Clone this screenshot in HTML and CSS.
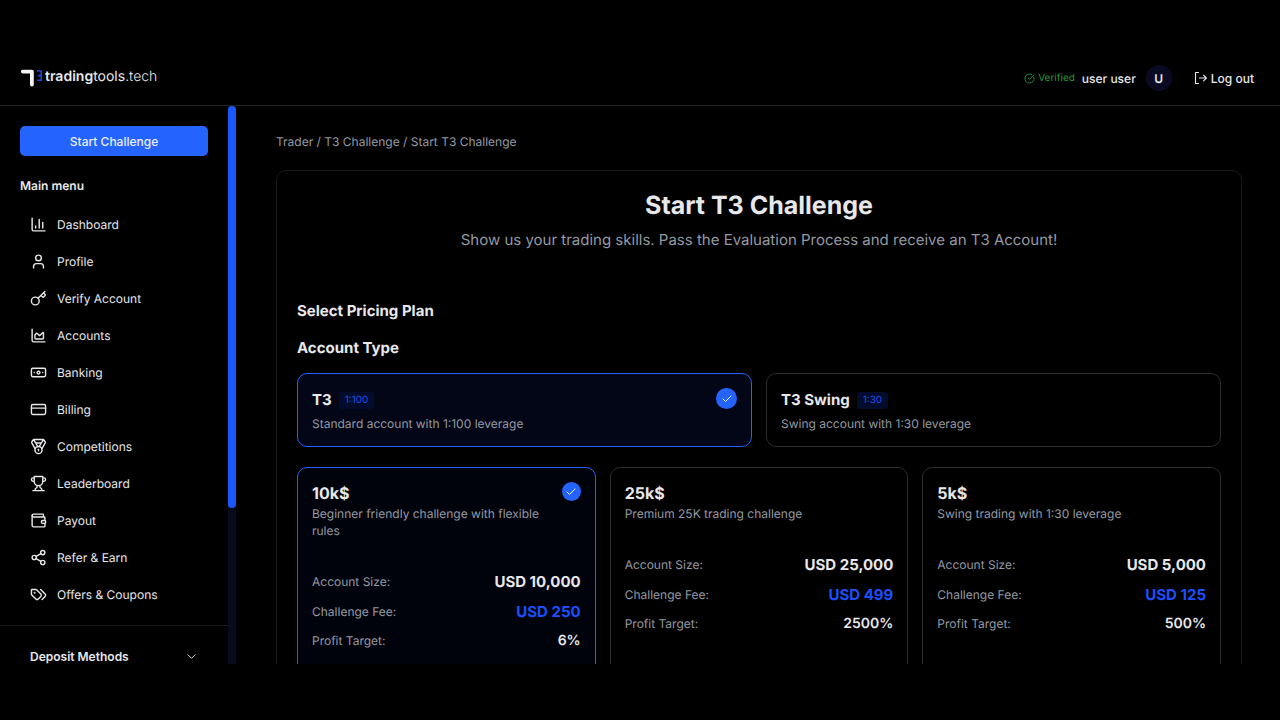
FILE: index.html
```html
<!DOCTYPE html>
<html lang="en">
<head>
<meta charset="utf-8">
<meta name="viewport" content="width=device-width, initial-scale=1">
<title>Start T3 Challenge</title>
<link rel="stylesheet" href="styles.css">
</head>
<body>
<header class="topbar">
  <a class="logo" href="#" aria-label="tradingtools.tech">
    <svg class="logo-mark" viewBox="0 0 22 19" aria-hidden="true">
      <path d="M1.8 2.6H10.9V15.6" fill="none" stroke="#f4f4f5" stroke-width="3.8" stroke-linecap="round" stroke-linejoin="round"/>
      <path d="M16 2h4.2v9.2H16M16.8 6.6h3.4" fill="none" stroke="#1d45d8" stroke-width="1.6"/>
    </svg>
    <span class="logo-text"><b>trading</b>tools<i>.tech</i></span>
  </a>
  <div class="account">
    <span class="verified">
      <svg class="icon icon-xs" viewBox="0 0 24 24" aria-hidden="true"><path d="M21.8 10A10 10 0 1 1 17 3.34"/><path d="m9 11 3 3L22 4"/></svg>
      Verified
    </span>
    <span class="username">user user</span>
    <span class="avatar">U</span>
    <button class="logout" type="button">
      <svg class="logout-icon" viewBox="0 0 14 14" aria-hidden="true"><path d="M4.5 1.5H1.5v11H4.5M5.5 7h6.9M9.6 4.2 12.4 7 9.6 9.8"/></svg>
      Log out
    </button>
  </div>
</header>
<div class="shell">
  <aside class="sidebar">
    <div class="sidebar-body">
      <div class="sidebar-main">
        <button class="start" type="button">Start Challenge</button>
        <h2 class="menu-title">Main menu</h2>
        <nav class="menu" aria-label="Main menu">
          <a class="item" href="#"><svg class="icon" viewBox="0 0 24 24" aria-hidden="true"><path d="M3 3v16a2 2 0 0 0 2 2h16M18 17V9M13 17V5M8 17v-3"/></svg>Dashboard</a>
          <a class="item" href="#"><svg class="icon" viewBox="0 0 24 24" aria-hidden="true"><path d="M19 21v-2a4 4 0 0 0-4-4H9a4 4 0 0 0-4 4v2"/><circle cx="12" cy="7" r="4"/></svg>Profile</a>
          <a class="item" href="#"><svg class="icon" viewBox="0 0 24 24" aria-hidden="true"><path d="m15.5 7.5 2.3 2.3a1 1 0 0 0 1.4 0l2.1-2.1a1 1 0 0 0 0-1.4L19 4M21 2l-9.6 9.6"/><circle cx="7.5" cy="15.5" r="5.5"/></svg>Verify Account</a>
          <a class="item" href="#"><svg class="icon" viewBox="0 0 24 24" aria-hidden="true"><path d="M3 3v16a2 2 0 0 0 2 2h16"/><path d="M7 11.207a.5.5 0 0 1 .146-.353l2-2a.5.5 0 0 1 .708 0l3.292 3.292a.5.5 0 0 0 .708 0l4.292-4.292a.5.5 0 0 1 .854.353V16a1 1 0 0 1-1 1H8a1 1 0 0 1-1-1z"/></svg>Accounts</a>
          <a class="item" href="#"><svg class="icon" viewBox="0 0 24 24" aria-hidden="true"><rect x="2" y="6" width="20" height="12" rx="2"/><circle cx="12" cy="12" r="2"/><path d="M6 12h.01M18 12h.01"/></svg>Banking</a>
          <a class="item" href="#"><svg class="icon" viewBox="0 0 24 24" aria-hidden="true"><rect x="2" y="5" width="20" height="14" rx="2"/><path d="M2 10h20"/></svg>Billing</a>
          <a class="item" href="#"><svg class="icon" viewBox="0 0 24 24" aria-hidden="true"><path d="M7.21 15 2.66 7.14a2 2 0 0 1 .13-2.2L4.4 2.8A2 2 0 0 1 6 2h12a2 2 0 0 1 1.6.8l1.6 2.14a2 2 0 0 1 .14 2.2L16.79 15M11 12 5.12 2.2M13 12l5.88-9.8M8 7h8"/><circle cx="12" cy="17" r="5"/><path d="M12 18v-2h-.5"/></svg>Competitions</a>
          <a class="item" href="#"><svg class="icon" viewBox="0 0 24 24" aria-hidden="true"><path d="M6 9H4.5a2.5 2.5 0 0 1 0-5H6M18 9h1.5a2.5 2.5 0 0 0 0-5H18M4 22h16M10 14.66V17c0 .55-.47.98-.97 1.21C7.85 18.75 7 20.24 7 22M14 14.66V17c0 .55.47.98.97 1.21C16.15 18.75 17 20.24 17 22M18 2H6v7a6 6 0 0 0 12 0V2Z"/></svg>Leaderboard</a>
          <a class="item" href="#"><svg class="icon" viewBox="0 0 24 24" aria-hidden="true"><path d="M19 7V4a1 1 0 0 0-1-1H5a2 2 0 0 0 0 4h15a1 1 0 0 1 1 1v4h-3a2 2 0 0 0 0 4h3a1 1 0 0 0 1-1v-2a1 1 0 0 0-1-1"/><path d="M3 5v14a2 2 0 0 0 2 2h15a1 1 0 0 0 1-1v-4"/></svg>Payout</a>
          <a class="item" href="#"><svg class="icon" viewBox="0 0 24 24" aria-hidden="true"><circle cx="18" cy="5" r="3"/><circle cx="6" cy="12" r="3"/><circle cx="18" cy="19" r="3"/><path d="m8.59 13.51 6.83 3.98M15.41 6.51l-6.82 3.98"/></svg>Refer &amp; Earn</a>
          <a class="item" href="#"><svg class="icon" viewBox="0 0 24 24" aria-hidden="true"><path d="m15 5 6.3 6.3a2.4 2.4 0 0 1 0 3.4L17 19"/><path d="M9.586 5.586A2 2 0 0 0 8.172 5H3a1 1 0 0 0-1 1v5.172a2 2 0 0 0 .586 1.414L8.29 18.29a2.426 2.426 0 0 0 3.42 0l3.58-3.58a2.426 2.426 0 0 0 0-3.42z"/><circle cx="6.5" cy="9.5" r=".5" fill="currentColor"/></svg>Offers &amp; Coupons</a>
        </nav>
      </div>
      <button class="section" type="button" aria-expanded="false">Deposit Methods
        <svg class="icon icon-xs" viewBox="0 0 24 24" aria-hidden="true"><path d="m4 8 8 8 8-8"/></svg>
      </button>
    </div>
    <div class="rail" aria-hidden="true"><div class="thumb"></div></div>
  </aside>
  <main class="content">
    <nav class="crumbs" aria-label="Breadcrumb">Trader / T3 Challenge / Start T3 Challenge</nav>
    <form class="panel">
      <div class="intro">
        <h1>Start T3 Challenge</h1>
        <p>Show us your trading skills. Pass the Evaluation Process and receive an T3 Account!</p>
      </div>
      <h2>Select Pricing Plan</h2>
      <h2 id="type-title">Account Type</h2>
      <div class="types" role="radiogroup" aria-labelledby="type-title">
        <label class="card card-type">
          <span class="card-text">
            <span class="type-name">T3 <span class="ratio">1:100</span></span>
            <span class="desc">Standard account with 1:100 leverage</span>
          </span>
          <input class="check" type="radio" name="type" checked>
        </label>
        <label class="card card-type">
          <span class="card-text">
            <span class="type-name">T3 Swing <span class="ratio">1:30</span></span>
            <span class="desc">Swing account with 1:30 leverage</span>
          </span>
          <input class="check" type="radio" name="type">
        </label>
      </div>
      <div class="plans" role="radiogroup" aria-label="Pricing plan">
        <label class="card card-plan">
          <span class="plan-head">
            <span class="card-text"><span class="plan-name">10k$</span><span class="desc">Beginner friendly challenge with flexible rules</span></span>
            <input class="check check-sm" type="radio" name="plan" checked>
          </span>
          <span class="row">Account Size: <b>USD 10,000</b></span>
          <span class="row">Challenge Fee: <b class="fee">USD 250</b></span>
          <span class="row">Profit Target: <b class="target">6%</b></span>
        </label>
        <label class="card card-plan">
          <span class="plan-head">
            <span class="card-text"><span class="plan-name">25k$</span><span class="desc">Premium 25K trading challenge</span></span>
            <input class="check check-sm" type="radio" name="plan">
          </span>
          <span class="row">Account Size: <b>USD 25,000</b></span>
          <span class="row">Challenge Fee: <b class="fee">USD 499</b></span>
          <span class="row">Profit Target: <b class="target">2500%</b></span>
        </label>
        <label class="card card-plan">
          <span class="plan-head">
            <span class="card-text"><span class="plan-name">5k$</span><span class="desc">Swing trading with 1:30 leverage</span></span>
            <input class="check check-sm" type="radio" name="plan">
          </span>
          <span class="row">Account Size: <b>USD 5,000</b></span>
          <span class="row">Challenge Fee: <b class="fee">USD 125</b></span>
          <span class="row">Profit Target: <b class="target">500%</b></span>
        </label>
      </div>
    </form>
  </main>
</div>
</body>
</html>
```
FILE: styles.css
```css
*, *::before, *::after { box-sizing: border-box; }

:root {
  --text: #e8e8eb;
  --muted: #9499a3;
  --blue: #2563ff;
  --line: #1a1a1d;
}

body {
  margin: 0;
  height: 100vh;
  padding: 51px 0 56px;
  display: flex;
  flex-direction: column;
  overflow: hidden;
  background: #000;
  color: var(--text);
  font: 12px/17px Inter, "Liberation Sans", sans-serif;
  text-rendering: geometricPrecision;
}

h1, h2, p { margin: 0; }
a { color: inherit; text-decoration: none; }
button { font: inherit; color: inherit; background: none; border: 0; padding: 0; cursor: pointer; }

.icon {
  width: 17px;
  height: 17px;
  flex: none;
  fill: none;
  stroke: currentColor;
  stroke-width: 2;
  stroke-linecap: round;
  stroke-linejoin: round;
}
.icon-xs { width: 11px; height: 11px; }

/* Top bar */
.topbar {
  flex: none;
  display: flex;
  align-items: center;
  justify-content: space-between;
  padding: 14px 26px 14px 21px;
  border-bottom: 1px solid #222225;
}
.logo { display: flex; align-items: center; gap: 2px; }
.logo-mark { width: 22px; height: 19px; }
.logo-text { font-size: 14px; padding-bottom: 4px; }
.logo-text b { font-weight: 600; }
.logo-text i { font-style: normal; font-weight: 300; }
.account { display: flex; align-items: center; font-weight: 500; }
.verified { display: flex; align-items: center; gap: 3px; font-size: 10px; font-weight: 400; color: #22963f; }
.username { margin: 0 10px 0 7px; }
.avatar {
  width: 26px;
  height: 26px;
  border-radius: 50%;
  background: #0a0b22;
  display: grid;
  place-items: center;
  font-weight: 600;
}
.logout { display: flex; align-items: center; gap: 3px; margin-left: 22px; font-weight: 500; }
.logout-icon { width: 14px; height: 14px; fill: none; stroke: currentColor; stroke-width: 1.1; stroke-linecap: round; stroke-linejoin: round; }

/* Sidebar */
.shell { flex: 1; min-height: 0; display: flex; }
.sidebar { flex: none; width: 236px; display: flex; overflow: hidden; }
.sidebar-body { flex: 1; }
.sidebar-main { padding: 20px 20px 12px; border-bottom: 1px solid var(--line); }
.start {
  width: 100%;
  padding: 7px 0 6px;
  border-radius: 5px;
  background: var(--blue);
  color: #e8eeff;
  font-weight: 500;
}
.menu-title { margin: 21px 0 12px; font-size: 12px; font-weight: 600; }
.menu { display: flex; flex-direction: column; }
.item { display: flex; align-items: center; gap: 10px; padding: 10px; }
.section {
  width: 100%;
  display: flex;
  align-items: center;
  justify-content: space-between;
  padding: 22px 31px 22px 30px;
  font-weight: 600;
}
.rail { width: 8px; background: #0a0a1f; }
.thumb { height: 72%; border-radius: 4px; background: #1b58fb; }

/* Content */
.content { flex: 1; min-width: 0; padding: 27px 38px 0 40px; overflow: hidden; }
.crumbs { color: var(--muted); }
.panel {
  margin-top: 20px;
  padding: 20px;
  border: 1px solid var(--line);
  border-radius: 10px;
}
.intro { text-align: center; padding-bottom: 47px; }
.intro h1 { font-size: 25px; line-height: 31px; font-weight: 700; }
.intro p { margin-top: 6px; font-size: 15px; line-height: 24px; color: var(--muted); }
.panel h2 { font-size: 15px; line-height: 24px; font-weight: 700; margin-bottom: 13px; }

.types { display: grid; grid-template-columns: repeat(2, 1fr); gap: 14px; }
.plans { display: grid; grid-template-columns: repeat(3, 1fr); gap: 14px; margin-top: 20px; }
.card { border: 1px solid #2c2c2f; border-radius: 10px; padding: 14px; cursor: pointer; }
.card:has(:checked) { border-color: #2660ff; }
.card-type { display: flex; justify-content: space-between; align-items: flex-start; }
.card-type:has(:checked) { background: #020617; }
.card-plan { min-height: 300px; display: flex; flex-direction: column; gap: 7px; }
.card-plan:has(:checked) { background: #01030c; }
.card-text { display: flex; flex-direction: column; }
.type-name { display: flex; align-items: center; gap: 7px; margin-bottom: 3px; font-size: 15px; line-height: 24px; font-weight: 700; }
.ratio { padding: 0 6px; border-radius: 3px; background: #030c2c; color: #1d4fe8; font-size: 10px; line-height: 17px; font-weight: 400; }
.desc { color: var(--muted); }

.check {
  appearance: none;
  flex: none;
  width: 21px;
  height: 21px;
  margin: 0;
  border-radius: 50%;
}
.check:checked {
  background: var(--blue) url("data:image/svg+xml,%3Csvg xmlns='http://www.w3.org/2000/svg' viewBox='0 0 24 24' fill='none' stroke='white' stroke-width='2' stroke-linecap='round' stroke-linejoin='round'%3E%3Cpath d='M20 6 9 17l-5-5'/%3E%3C/svg%3E") center / 12px no-repeat;
}
.check-sm { width: 19px; height: 19px; }

.plan-head { display: flex; justify-content: space-between; margin-bottom: 24px; }
.plan-name { font-size: 16px; line-height: 23px; font-weight: 700; }
.row { display: flex; align-items: center; justify-content: space-between; color: var(--muted); }
.row b { font-size: 15px; line-height: 23px; font-weight: 700; color: var(--text); }
.row .fee { color: #1d4fff; }
.row .target { font-size: 14px; line-height: 21px; font-weight: 600; }
```
